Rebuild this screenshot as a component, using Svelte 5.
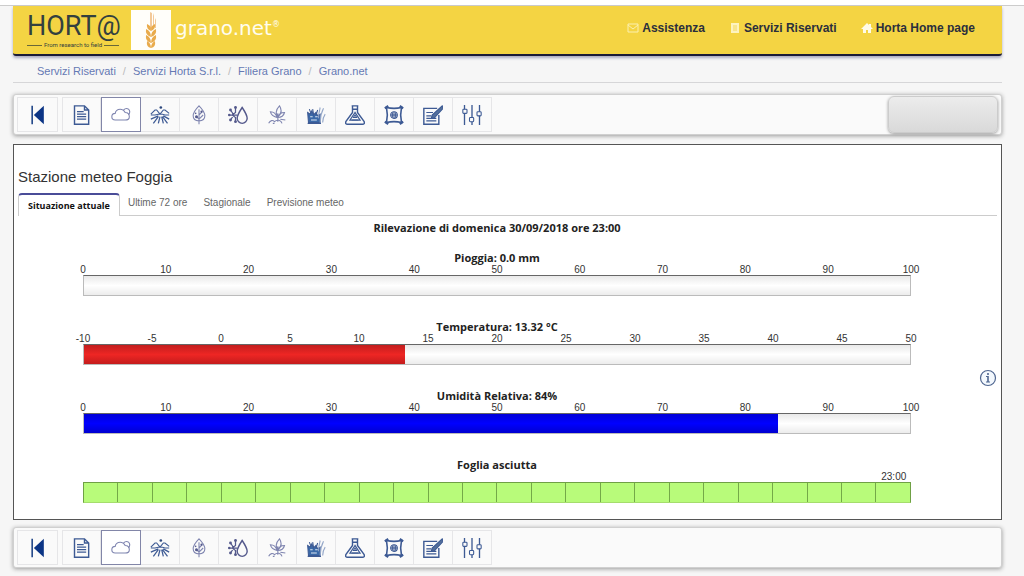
<script>
 let activeTool = 'weather';
 let activeTab = 0;

 const tools = [
     ['report', 'Report'],
     ['weather', 'Meteo'],
     ['field', 'Campo'],
     ['leaf', 'Foglia'],
     ['frost', 'Gelo e acqua'],
     ['plant', 'Pianta'],
     ['weeds', 'Infestanti'],
     ['flask', 'Trattamenti'],
     ['bag', 'Concimazione'],
     ['notes', 'Registro'],
     ['settings', 'Impostazioni'],
 ];

 const crumbs = ['Servizi Riservati', 'Servizi Horta S.r.l.', 'Filiera Grano', 'Grano.net'];
 const tabs = ['Situazione attuale', 'Ultime 72 ore', 'Stagionale', 'Previsione meteo'];

 const gauges = [
     { title: 'Pioggia: 0.0 mm', value: 0, min: 0, max: 100, step: 10, color: 'none' },
     { title: 'Temperatura: 13.32 °C', value: 13.32, min: -10, max: 50, step: 5, color: 'red' },
     { title: 'Umidità Relativa: 84%', value: 84, min: 0, max: 100, step: 10, color: 'blue' },
 ];

 const hours = Array.from({ length: 24 }, (_, i) => i);

 const ticks = (g) => {
     const list = [];
     for (let t = g.min; t <= g.max; t += g.step) list.push(t);
     return list;
 };

 const percent = (g) => 100 * (g.value - g.min) / (g.max - g.min);
</script>

{#snippet icon(name)}
    <svg class="icon" viewBox="0 0 24 24" aria-hidden="true">
        {#if name === 'first'}
            <path d="M5 1v22" stroke="#123a80" stroke-width="1.8" />
            <path d="M19 1v22L7 12z" fill="#0b3485" stroke="none" />
        {:else if name === 'report'}
            <path d="M3 1h12l5 5v17H3zM15 1v5h5" stroke-width="1.7" />
            <path d="M6 8h8M6 11h11M6 14h11M6 17h11" stroke-width="1.4" />
        {:else if name === 'weather'}
            <path d="M5 18q-4 0-4-4t4-4q1-5 6-5 4 0 6 4 5 0 5 5 0 4-5 4z" />
            <path d="M15 6q3-3 6-1 3 3 0 7" />
        {:else if name === 'field'}
            <circle cx="13" cy="3" r="1.600" fill="#2c477d" stroke="none" />
            <path d="M1 11l5-5 2 0 4 5M12 11l4-5h2l5 4M1 12h5l4-1h5l3 1h5" />
            <path d="M10 13L1 17M10 14L4 22M12 14l-2 8M14 14l2 8M15 14l6 8M16 13l7 4" stroke-width="1.500" />
        {:else if name === 'leaf'}
            <path d="M12 1C7 6 5 9 5 13c0 4 3 6 7 6s7-2 7-6c0-4-2-7-7-12zM12 5v18M12 12l4-4M12 17l5-5M12 17l-4-4" />
            <circle cx="9" cy="14" r="1.800" fill="#54598c" stroke="none" />
            <circle cx="8" cy="10" r="1" fill="#54598c" stroke="none" />
            <circle cx="15" cy="8" r="1.300" fill="#54598c" stroke="none" />
        {:else if name === 'frost'}
            <path d="M17 3c-4 6-6 9-6 13a6 6 0 0 0 12 0c0-4-2-7-6-13z" stroke-width="1.700" />
            <path d="M1 12h10M9 3v6l-4 3 4 3v5M3 6l4 6-4 6" stroke-width="1.500" />
            <g fill="#54598c" stroke="none">
                <circle cx="1.500" cy="12" r="1.500" />
                <circle cx="3" cy="6" r="1.700" />
                <circle cx="3" cy="18" r="1.700" />
                <circle cx="9" cy="3" r="1.700" />
                <circle cx="9" cy="20" r="1.700" />
            </g>
        {:else if name === 'plant'}
            <path d="M13 14c-3-4-3-8 2-13 3 5 2 10-2 13zM12 15C8 14 5 12 4 8c5 0 7 3 8 7zM13 15c1-4 4-6 8-6-1 4-3 6-8 6zM13 10v10M2 22c2-4 5-4 7-2 3-3 8-2 9 2M7 22h2M16 17l6 1" />
        {:else if name === 'weeds'}
            <path d="M2 9l3 2 2-4 2 5 3-3 2 4 3-2v10H3z" fill="#3a69a8" />
            <path d="M4 5l2 5M8 5l1 6M14 6l-2 6M2 22h16" />
            <path d="M17 21c0-7 1-11 4-17M15 16c0-5 1-9 2-13M20 21c0-5 1-7 3-10" stroke="#93a6c8" />
            <path d="M5 14h3M11 14h3M6 18h7" stroke="#dce6f2" />
        {:else if name === 'flask'}
            <path d="M8 1h8M9 1v8L1 20q-1 3 2 3h18q3 0 2-3L15 9V1M9 5h6" stroke-width="1.700" />
            <path d="M12 9L6 18h12z" stroke-width="1.500" />
            <path d="M10 15l2-3 2 3zM8 18h8" />
        {:else if name === 'bag'}
            <path d="M3 3q9 2 18 0-2 9 0 18-9-2-18 0 2-9 0-18z" stroke-width="1.900" />
            <path d="M1 4l4-3M19 1l4 3M1 20l4 3M19 23l4-3" stroke-width="2.500" />
            <circle cx="12" cy="12" r="4" />
            <path d="M8 12h8M12 8v8M10 9v6M14 9v6" />
        {:else if name === 'notes'}
            <path d="M17 4H1v19h18V12" stroke-width="1.700" />
            <path d="M4 9h8M4 13h6M4 16h12M4 19h12" stroke-width="1.400" />
            <path d="M23 1L11 12l-1 4 4-1L24 4z" fill="#54709b" />
        {:else if name === 'settings'}
            <path d="M3 0v5M3 10v14M12 0v15M12 20v4M21 0v8M21 13v11" stroke-width="1.600" />
            <rect x="1" y="5" width="5" height="5" rx="1" />
            <rect x="9" y="15" width="5" height="5" rx="1" />
            <rect x="18" y="8" width="5" height="5" rx="1" />
        {/if}
    </svg>
{/snippet}

{#snippet toolbar(label, extra)}
    <div class="toolbar" role="toolbar" aria-label={label}>
        <button class="tool first" aria-label="Indietro">{@render icon('first')}</button>
        {#each tools as [name, text]}
            <button
                class="tool {name}"
                class:selected={activeTool === name}
                aria-label={text}
                onclick={() => activeTool = name}
            >{@render icon(name)}</button>
        {/each}
        {#if extra}
            <button class="blank" aria-label="Azienda"></button>
        {/if}
    </div>
{/snippet}

<div class="page">
    <header>
        <a class="horta" href="#home">
            <span class="name">HORT@</span>
            <span class="motto">From research to field</span>
        </a>
        <svg class="wheat" viewBox="0 0 40 40" aria-hidden="true">
            <rect width="40" height="40" fill="#fffefa" />
            <g fill="#f3c99a">
                <path d="M19 2v16h2V3zM22 3v15h1V6zM24 8v10h1V10z" />
            </g>
            <g fill="#e9ab4c">
                <path d="M20 21q-5-2-4-7 5 2 4 7zM20 21q5-2 4-7-5 2-4 7z" />
                <path d="M20 27q-6-2-5-8 5 2 5 8zM20 27q6-2 5-8-5 2-5 8z" />
                <path d="M20 33q-6-2-5-8 5 2 5 8zM20 33q6-2 5-8-5 2-5 8z" />
                <path d="M20 38q-5-1-4-7 4 2 4 7zM20 38q5-1 4-7-4 2-4 7z" />
            </g>
        </svg>
        <span class="product">grano.net<sup>®</sup></span>
        <nav>
            <a href="#assistenza">
                <svg viewBox="0 0 12 12" fill="none" stroke="#fbf0b0" aria-hidden="true"><path d="M1 2h10v8H1zM1 3l5 4 5-4" /></svg>
                Assistenza
            </a>
            <a href="#servizi">
                <svg viewBox="0 0 12 12" aria-hidden="true"><path d="M2 1h8v10H2z" fill="#fdf3c0" /><path d="M4 4h4M4 6h4M4 8h4" stroke="#f3d85c" /></svg>
                Servizi Riservati
            </a>
            <a href="#horta">
                <svg viewBox="0 0 12 12" aria-hidden="true"><path d="M6 1l2 2V2h2v3l2 2h-2v4H7V8H5v3H2V7H0z" fill="#fffbe8" /></svg>
                Horta Home page
            </a>
        </nav>
    </header>

    <nav class="crumbs" aria-label="Percorso">
        {#each crumbs as crumb, i}
            {#if i > 0}<span class="slash">/</span>{/if}
            <a href="#{i}">{crumb}</a>
        {/each}
    </nav>

    {@render toolbar('Strumenti', true)}

    <main>
        <h1>Stazione meteo Foggia</h1>
        <div class="tabs" role="tablist">
            {#each tabs as tab, i}
                <button
                    role="tab"
                    aria-selected={activeTab === i}
                    class:active={activeTab === i}
                    onclick={() => activeTab = i}
                >{tab}</button>
            {/each}
        </div>

        <div class="content">
            <div class="gauges">
                <h2>Rilevazione di domenica 30/09/2018 ore 23:00</h2>
                {#each gauges as g}
                    <section>
                        <h3>{g.title}</h3>
                        <div class="scale">
                            {#each ticks(g) as t}<span>{t}</span>{/each}
                        </div>
                        <div class="bar">
                            <div class="fill {g.color}" style="width: {percent(g)}%"></div>
                        </div>
                    </section>
                {/each}
                <section>
                    <h3>Foglia asciutta</h3>
                    <div class="hours">
                        {#each hours as h}<span>{h === 23 ? '23:00' : ''}</span>{/each}
                    </div>
                    <div class="wetness">
                        {#each hours as h}<i></i>{/each}
                    </div>
                </section>
            </div>
            <button class="info" aria-label="Informazioni">
                <svg viewBox="0 0 18 18" fill="none" stroke="#4f6690" aria-hidden="true">
                    <circle cx="9" cy="9" r="7.500" fill="#f3f8fd" stroke-width="1.200" />
                    <path d="M9 4v2M9 7v6" stroke-width="1.600" />
                    <path d="M7 7.500h2M7 13h4" />
                </svg>
            </button>
        </div>
    </main>

    {@render toolbar('Strumenti in basso', false)}
</div>

<style>
 :global(body) {
     background: #f6f6f6;
     border-top: 5px solid #fff;
     font-family: "Liberation Sans", Arial, sans-serif;
 }

 .page {
     border-top: 1px solid #ccc;
     padding: 0 22px 8px 13px;
 }

 button {
     font: inherit;
     padding: 0;
     cursor: pointer;
 }

 a {
     text-decoration: none;
 }

 header {
     display: flex;
     align-items: center;
     height: 48px;
     padding: 0 27px 0 14px;
     background: #f4d443;
     border-bottom: 2px solid #1b1c38;
     border-radius: 0 0 3px 3px;
     box-shadow: 0 2px 3px #aaaac0;
 }

 .horta {
     display: flex;
     flex-direction: column;
     width: 92px;
     margin-right: 12px;
     color: #33403f;
 }

 .name {
     font-family: Roboto, sans-serif;
     font-weight: 400;
     font-size: 27px;
     line-height: 30px;
 }

 .motto {
     display: flex;
     align-items: center;
     gap: 2px;
     font-family: "Liberation Sans Narrow", Roboto, sans-serif;
     font-size: 6px;
     line-height: 8px;
     white-space: nowrap;
 }

 .motto::before, .motto::after {
     content: "";
     flex: 1;
     height: 1px;
     background: #6a6838;
 }

 .wheat {
     width: 40px;
     height: 40px;
     margin-right: 4px;
 }

 .product {
     padding-bottom: 4px;
     color: #fffdf0;
     font-family: "DejaVu Sans", Verdana, sans-serif;
     font-size: 20px;
     line-height: 24px;
 }

 .product sup {
     font-size: 8px;
     line-height: 8px;
     vertical-align: 8px;
 }

 header nav {
     display: flex;
     gap: 24px;
     margin-left: auto;
     padding-bottom: 4px;
 }

 header nav a {
     display: flex;
     align-items: center;
     gap: 3px;
     color: #2b2f3d;
     font-size: 12px;
     font-weight: bold;
     line-height: 16px;
     white-space: nowrap;
 }

 header nav svg {
     width: 12px;
     height: 12px;
 }

 .crumbs {
     display: flex;
     gap: 7px;
     padding: 8px 24px 4px;
     border-bottom: 1px solid #d6d6d8;
     color: #bbb;
     font-size: 11px;
     line-height: 14px;
 }

 .crumbs a {
     color: #6579b4;
 }

 .toolbar {
     display: flex;
     align-items: center;
     box-sizing: border-box;
     height: 41px;
     margin: 11px 0 9px;
     padding: 0 3px;
     background: #fafafa;
     border: 1px solid #d0d0d0;
     border-radius: 3px;
     box-shadow: 0 1px 4px #999;
 }

 main + .toolbar {
     margin-top: 7px;
     margin-bottom: 0;
 }

 .tool {
     display: flex;
     align-items: center;
     justify-content: center;
     box-sizing: border-box;
     width: 39px;
     height: 35px;
     background: #fafafa;
     border: 1px solid #e6e6e8;
     border-left-width: 0;
 }

 .tool.first {
     width: 41px;
     margin-right: 4px;
     border-left-width: 1px;
 }

 .tool.report {
     border-left-width: 1px;
 }

 .tool.selected {
     width: 40px;
     border: 1px solid #8286a8;
     background: #fff;
 }

 .icon {
     width: 20px;
     height: 20px;
     fill: none;
     stroke: #3d5a94;
     stroke-width: 1.3;
 }

 .weather .icon, .leaf .icon, .plant .icon {
     stroke: #7f85b0;
 }

 .frost .icon {
     stroke: #54598c;
 }

 .blank {
     width: 110px;
     height: 37px;
     margin-left: auto;
     background: linear-gradient(#ececec, #d9d9d9);
     border: 1px solid #ccc;
     border-radius: 6px;
     box-shadow: 0 1px 3px #999;
 }

 main {
     padding: 22px 4px 16px;
     background: #fff;
     border: 1px solid #555;
 }

 h1, h2, h3 {
     margin: 0;
 }

 h1 {
     color: #333;
     font-size: 15px;
     font-weight: normal;
     line-height: 20px;
 }

 .tabs {
     display: flex;
     margin-top: 6px;
     border-bottom: 1px solid #ccc;
 }

 .tabs button {
     height: 20px;
     padding: 0 8px;
     background: none;
     border: 0;
     color: #666;
     font-size: 10px;
     line-height: 20px;
 }

 .tabs .active {
     height: 23px;
     margin-bottom: -1px;
     padding: 0 9px;
     background: #fff;
     border: 1px solid #ccc;
     border-top: 2px solid #4a4c98;
     border-bottom: 0;
     border-radius: 4px 4px 0 0;
     color: #111;
     font-family: "Open Sans", sans-serif;
     font-size: 9px;
     font-weight: bold;
 }

 .content {
     display: flex;
     align-items: center;
     padding-top: 5px;
 }

 .gauges {
     flex: 1;
     padding-left: 65px;
 }

 h2, h3 {
     color: #222;
     font-family: "Open Sans", sans-serif;
     font-size: 11px;
     line-height: 14px;
     text-align: center;
 }

 section {
     margin-top: 24px;
 }

 h2 + section {
     margin-top: 16px;
 }

 .scale {
     display: flex;
     justify-content: space-between;
 }

 .scale span, .hours span {
     display: flex;
     justify-content: center;
     width: 0;
     color: #333;
     font-size: 10px;
     line-height: 10px;
 }

 .hours {
     display: flex;
     height: 10px;
 }

 .hours span {
     flex: 1;
 }

 .bar {
     box-sizing: border-box;
     height: 21px;
     background: linear-gradient(#e9e9e9, #fff 50%, #ececec);
     border: 1px solid #bbb;
     border-top-color: #666;
 }

 .fill {
     height: 100%;
 }

 .red {
     background: linear-gradient(#c21e1e, #ee2624 50%, #c41c1c);
 }

 .blue {
     background: linear-gradient(#0000d8, #0000ff 50%, #0000d0);
 }

 .wetness {
     display: flex;
     box-sizing: border-box;
     height: 21px;
     background: #b8fb7a;
     border: 1px solid #6fa045;
     border-bottom-color: #a5dd6d;
 }

 .wetness i {
     flex: 1;
 }

 .wetness i + i {
     border-left: 1px solid #74a848;
 }

 .info {
     width: 18px;
     height: 18px;
     margin: 32px 0 0 68px;
     background: none;
     border: 0;
 }

 .info svg {
     display: block;
 }
</style>
